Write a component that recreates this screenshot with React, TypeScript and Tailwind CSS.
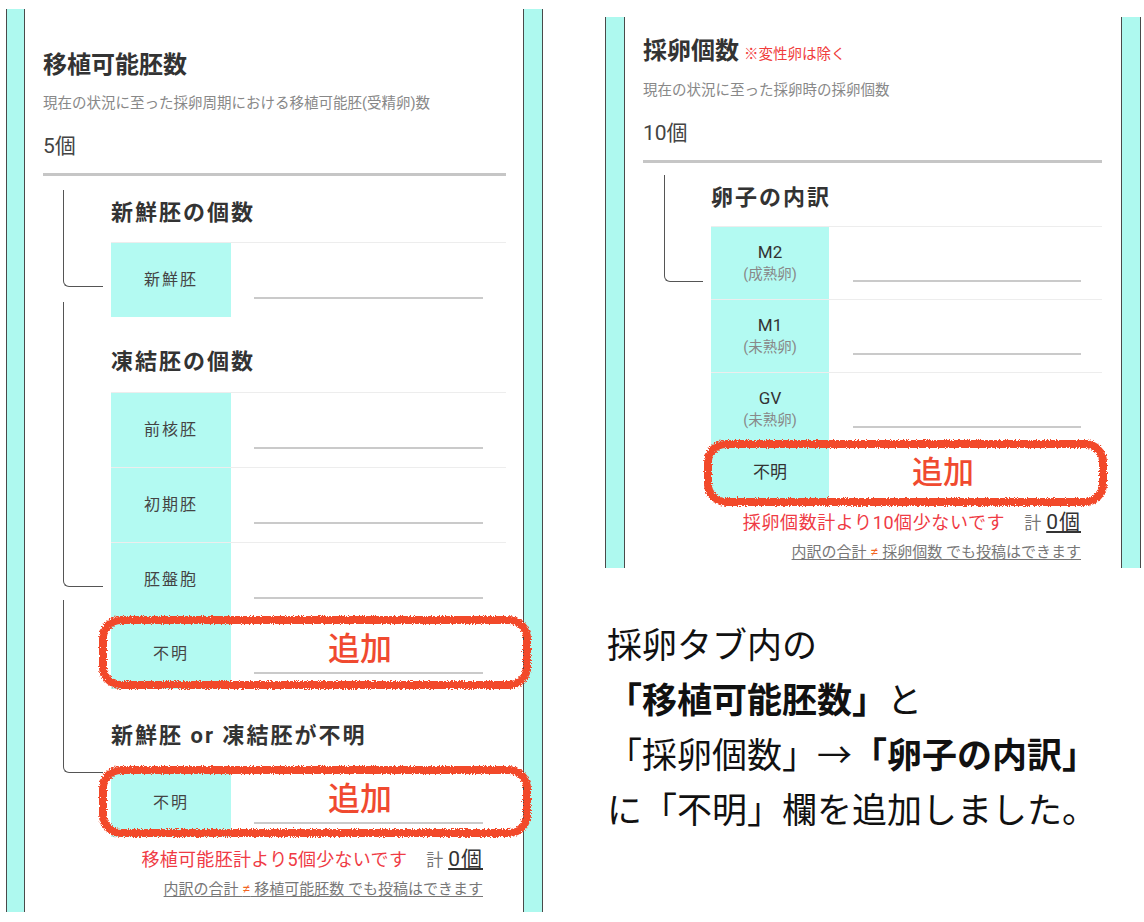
import React from "react";

function Strip({ narrow }: { narrow?: boolean }) {
  return (
    <div
      className={
        narrow
          ? "w-[19px] shrink-0 bg-[#aef9ef] border-x-[1.5px] border-[#4a4a4a]"
          : "w-[20px] shrink-0 bg-[#aef9ef] border-x-[1.5px] border-[#4a4a4a]"
      }
    />
  );
}

function Outline({ id, w, h, pos }: { id: string; w: number; h: number; pos: string }) {
  return (
    <svg className={"absolute pointer-events-none z-10 " + pos} width={w} height={h}>
      <defs>
        <filter id={id} x="-5%" y="-15%" width="110%" height="130%">
          <feTurbulence type="fractalNoise" baseFrequency="0.9" numOctaves="2" seed="4" result="n" />
          <feDisplacementMap in="SourceGraphic" in2="n" scale="5" xChannelSelector="R" yChannelSelector="G" />
        </filter>
      </defs>
      <rect
        x={5}
        y={5}
        width={w - 10}
        height={h - 10}
        rx={18}
        fill="none"
        stroke="#f24a2c"
        strokeWidth={8}
        filter={`url(#${id})`}
      />
    </svg>
  );
}

function Bracket({ cls }: { cls: string }) {
  return <div className={"border-l-[1.5px] border-b-[1.5px] border-[#555] rounded-bl-[6px] " + cls} />;
}

function LeftRow({ label, h75 = true }: { label: string; h75?: boolean }) {
  return (
    <div className={(h75 ? "h-[75px] " : "h-[72px] ") + "flex border-t border-[#ededed]"}>
      <div className="w-[120px] shrink-0 bg-[#b3faf2] flex items-center justify-center text-[16px] tracking-[2px] text-[#444]">
        {label}
      </div>
      <div className="flex-1 pl-[23px] pt-[54px]">
        <div className="w-[229px] h-[2px] bg-[#cacaca]" />
      </div>
    </div>
  );
}

function RightRow({ main, sub }: { main: string; sub: string }) {
  return (
    <div className="h-[73px] flex border-t border-[#ededed]">
      <div className="w-[118px] shrink-0 bg-[#b3faf2] flex flex-col items-center justify-center">
        <div className="text-[17px] leading-[24px] text-[#333]">{main}</div>
        <div className="text-[14.5px] leading-[22px] text-[#888]">{sub}</div>
      </div>
      <div className="flex-1 pl-[24px] pt-[53px]">
        <div className="w-[228px] h-[2px] bg-[#cacaca]" />
      </div>
    </div>
  );
}

export default function App() {
  return (
    <div className="w-[1144px] h-[922px] bg-white flex items-start overflow-hidden font-[Roboto,'Noto_Sans_CJK_JP',sans-serif]">
      {/* Left phone panel */}
      <div className="mt-[9px] ml-[6px] flex w-[537px] h-[903px] shrink-0">
        <Strip narrow />
        <div className="flex-1 bg-white pl-[18px] pr-[17px] pt-[40px]">
          <div className="text-[24px] leading-[32px] font-bold text-[#333]">移植可能胚数</div>
          <div className="mt-[13px] text-[14.5px] leading-[20px] text-[#888]">
            現在の状況に至った採卵周期における移植可能胚(受精卵)数
          </div>
          <div className="mt-[18px] text-[21px] leading-[28px] text-[#444]">5個</div>
          <div className="mt-[13px] h-[3px] bg-[#c6c6c6]" />
          <div className="flex">
            <div className="w-[68px] shrink-0 flex flex-col">
              <Bracket cls="mt-[14px] ml-[20px] w-[40px] h-[97px]" />
              <Bracket cls="mt-[15px] ml-[20px] w-[40px] h-[285px]" />
              <Bracket cls="mt-[13px] ml-[20px] w-[40px] h-[173px]" />
            </div>
            <div className="flex-1 flex flex-col">
              <div className="mt-[21px] text-[22px] leading-[32px] font-bold tracking-[2px] text-[#333]">
                新鮮胚の個数
              </div>
              <div className="mt-[13px]">
                <LeftRow label="新鮮胚" />
              </div>
              <div className="mt-[29px] text-[22px] leading-[32px] font-bold tracking-[2px] text-[#333]">
                凍結胚の個数
              </div>
              <div className="mt-[14px]">
                <LeftRow label="前核胚" />
                <LeftRow label="初期胚" />
                <LeftRow label="胚盤胞" />
                <div className="relative">
                  <LeftRow label="不明" h75={false} />
                  <Outline id="o1" w={434} h={75} pos="left-[-13px] top-[-2px]" />
                  <div className="absolute left-[217px] top-[12px] text-[32px] leading-[40px] font-medium text-[#f04a30] z-20">
                    追加
                  </div>
                </div>
              </div>
              <div className="mt-[31px] text-[22px] leading-[32px] font-bold tracking-[2px] text-[#333]">
                新鮮胚 or 凍結胚が不明
              </div>
              <div className="mt-[15px] relative">
                <div className="h-[70px] flex border-t border-[#ededed]">
                  <div className="w-[120px] shrink-0 bg-[#b3faf2] flex items-center justify-center text-[16px] tracking-[2px] text-[#444]">
                    不明
                  </div>
                  <div className="flex-1 pl-[23px] pt-[54px]">
                    <div className="w-[229px] h-[2px] bg-[#cacaca]" />
                  </div>
                </div>
                <Outline id="o2" w={434} h={73} pos="left-[-13px] top-[-2px]" />
                <div className="absolute left-[217px] top-[12px] text-[32px] leading-[40px] font-medium text-[#f04a30] z-20">
                  追加
                </div>
              </div>
              <div className="mt-[10px] pr-[23px] flex justify-end items-baseline leading-[24px]">
                <span className="text-[18px] tracking-[0.3px] text-[#ef3b45]">移植可能胚計より5個少ないです</span>
                <span className="ml-[19px] text-[17px] text-[#777]">計</span>
                <span className="ml-[5px] text-[21px] tracking-[1px] text-[#333] underline underline-offset-2">0個</span>
              </div>
              <div className="mt-[7px] pr-[23px] text-right text-[15px] leading-[20px] text-[#777] underline underline-offset-2">
                内訳の合計 <span className="text-[#f26522]">≠</span> 移植可能胚数 でも投稿はできます
              </div>
            </div>
          </div>
        </div>
        <Strip />
      </div>

      {/* Right column */}
      <div className="ml-[62px] flex flex-col shrink-0">
        <div className="mt-[17px] flex w-[536px] h-[551px]">
          <Strip />
          <div className="flex-1 bg-white pl-[18px] pr-[19px] pt-[18px]">
            <div className="flex items-baseline">
              <span className="text-[24px] leading-[32px] font-bold text-[#333]">採卵個数</span>
              <span className="ml-[5px] text-[14.5px] text-[#f03c3c]">※変性卵は除く</span>
            </div>
            <div className="mt-[14px] text-[14.5px] leading-[20px] text-[#888]">現在の状況に至った採卵時の採卵個数</div>
            <div className="mt-[18px] text-[21px] leading-[28px] text-[#444]">10個</div>
            <div className="mt-[13px] h-[3px] bg-[#c6c6c6]" />
            <div className="flex">
              <div className="w-[68px] shrink-0 flex flex-col">
                <Bracket cls="mt-[12px] ml-[21px] w-[39px] h-[107px]" />
              </div>
              <div className="flex-1 flex flex-col">
                <div className="mt-[19px] text-[22px] leading-[32px] font-bold tracking-[2px] text-[#333]">
                  卵子の内訳
                </div>
                <div className="mt-[12px]">
                  <RightRow main="M2" sub="(成熟卵)" />
                  <RightRow main="M1" sub="(未熟卵)" />
                  <RightRow main="GV" sub="(未熟卵)" />
                  <div className="relative">
                    <div className="h-[55px] flex border-t border-[#ededed]">
                      <div className="w-[118px] shrink-0 bg-[#b3faf2] flex items-center justify-center text-[17px] text-[#333]">
                        不明
                      </div>
                      <div className="flex-1" />
                    </div>
                    <Outline id="o3" w={405} h={68} pos="left-[-8px] top-[-6px]" />
                    <div className="absolute left-[201px] top-[8px] text-[31px] leading-[40px] font-medium text-[#f04a30] z-20">
                      追加
                    </div>
                  </div>
                </div>
                <div className="mt-[10px] pr-[21px] flex justify-end items-baseline leading-[24px]">
                  <span className="text-[18px] tracking-[0.6px] text-[#ef3b45]">採卵個数計より10個少ないです</span>
                  <span className="ml-[19px] text-[17px] text-[#777]">計</span>
                  <span className="ml-[5px] text-[21px] tracking-[1px] text-[#333] underline underline-offset-2">0個</span>
                </div>
                <div className="mt-[7px] pr-[21px] text-right text-[15px] leading-[20px] text-[#777] underline underline-offset-2">
                  内訳の合計 <span className="text-[#f26522]">≠</span> 採卵個数 でも投稿はできます
                </div>
              </div>
            </div>
          </div>
          <Strip />
        </div>

        <div className="mt-[47px] pl-[2px] text-[35px] leading-[55px] text-[#111] font-['Noto_Sans_CJK_JP',sans-serif]">
          <div>採卵タブ内の</div>
          <div>
            <span className="font-bold">「移植可能胚数」</span>と
          </div>
          <div>
            「採卵個数」→<span className="font-bold">「卵子の内訳」</span>
          </div>
          <div>に「不明」欄を追加しました。</div>
        </div>
      </div>
    </div>
  );
}
